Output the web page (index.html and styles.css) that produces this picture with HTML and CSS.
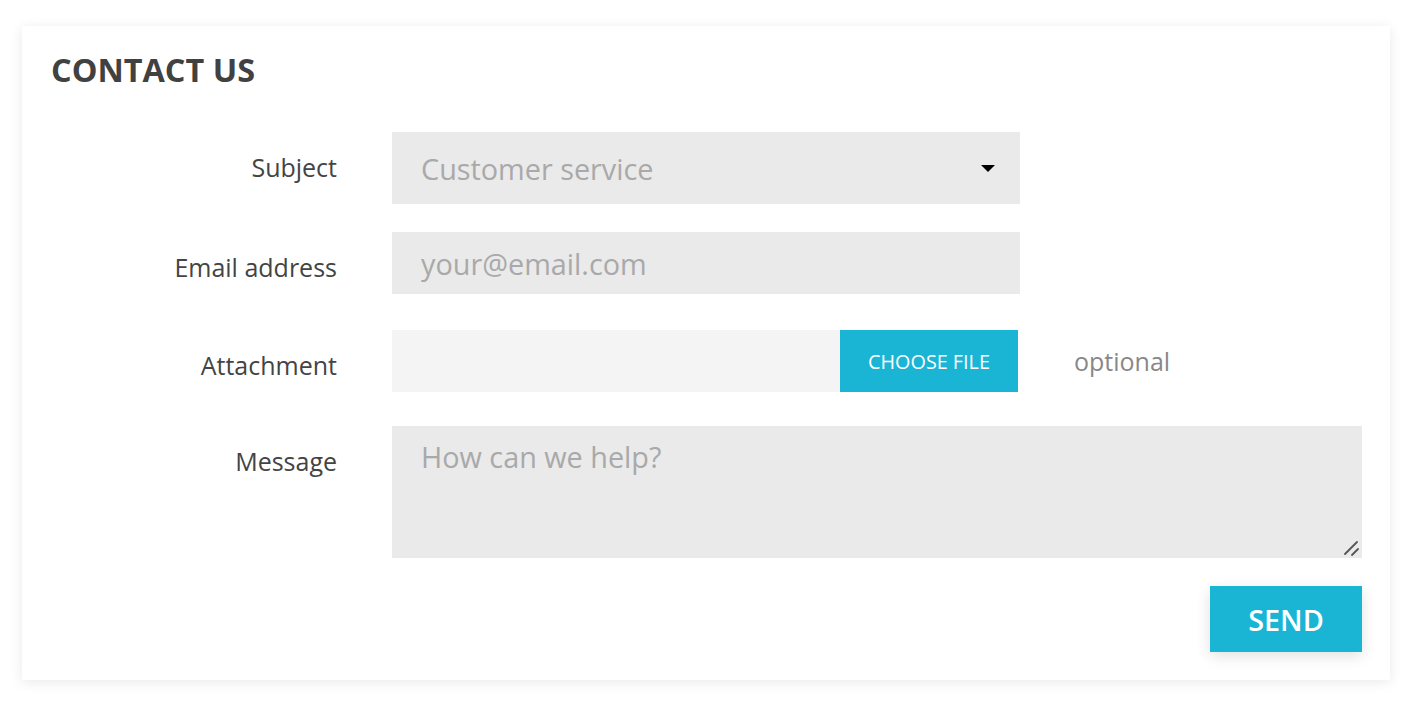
FILE: index.html
```html
<!DOCTYPE html>
<html lang="en">
<head>
<meta charset="utf-8">
<title>Contact us</title>
<link rel="stylesheet" href="styles.css">
</head>
<body>
<div class="page">
  <section class="card">
    <h1 class="title">CONTACT US</h1>
    <form class="form">
      <label class="label" for="subject">Subject</label>
      <div class="field field-subject">
        <div class="select-wrap">
          <select id="subject" class="select">
            <option>Customer service</option>
            <option>Webmaster</option>
          </select>
          <svg class="caret" width="14" height="7" viewBox="0 0 14 7" aria-hidden="true"><path d="M0 0H14L7 7Z" fill="#000"/></svg>
        </div>
      </div>

      <label class="label" for="email">Email address</label>
      <div class="field field-email">
        <input id="email" class="input" type="email" placeholder="your@email.com">
      </div>

      <label class="label" for="file">Attachment</label>
      <div class="field field-file">
        <div class="file">
          <span class="file-name"></span>
          <label class="file-btn" for="file">CHOOSE FILE</label>
          <input id="file" class="file-input" type="file">
        </div>
        <span class="optional">optional</span>
      </div>

      <label class="label" for="message">Message</label>
      <div class="field field-message">
        <div class="textarea-wrap">
          <textarea id="message" class="textarea" placeholder="How can we help?"></textarea>
          <svg class="grip" width="16" height="16" viewBox="0 0 16 16" aria-hidden="true">
            <path d="M2 14L14 2M9 15L15 9" stroke="#555" stroke-width="1.8" stroke-linecap="round" fill="none"/>
          </svg>
        </div>
      </div>

      <div class="actions">
        <button type="button" class="send">SEND</button>
      </div>
    </form>
  </section>
</div>
</body>
</html>
```

FILE: styles.css
```css
* {
  box-sizing: border-box;
}

html, body {
  margin: 0;
  padding: 0;
  background: #ffffff;
}

body {
  font-family: "Open Sans", "Liberation Sans", sans-serif;
  color: #444444;
}

.page {
  padding: 26px 24px 30px 22px;
}

.card {
  width: 1368px;
  background: #ffffff;
  padding: 21px 28px 28px 29px;
  box-shadow: 0 2px 12px rgba(0, 0, 0, 0.09);
}

.title {
  margin: 0 0 41px 0;
  font-size: 32.4px;
  line-height: 44px;
  font-weight: 700;
  color: #414141;
}

.form {
  display: grid;
  grid-template-columns: 286px 970px;
  column-gap: 55px;
  align-items: start;
}

.label {
  text-align: right;
  font-size: 25px;
  line-height: 34px;
  padding-top: 18px;
  color: #444444;
}

.field-subject { margin-bottom: 28px; }
.field-email { margin-bottom: 36px; }
.field-file { margin-bottom: 34px; }
.field-message { margin-bottom: 28px; }

.select-wrap {
  position: relative;
  width: 628px;
}

.select {
  appearance: none;
  -webkit-appearance: none;
  display: block;
  width: 628px;
  height: 72px;
  padding: 0 60px 0 29px;
  border: 0;
  border-radius: 0;
  background: #eaeaea;
  font-family: inherit;
  font-size: 28.8px;
  color: #a9a9a9;
  outline: none;
}

.caret {
  position: absolute;
  left: 589px;
  top: 33px;
  pointer-events: none;
}

.input {
  display: block;
  width: 628px;
  height: 62px;
  padding: 0 29px;
  border: 0;
  border-radius: 0;
  background: #eaeaea;
  font-family: inherit;
  font-size: 28.8px;
  color: #444444;
  outline: none;
}

.input::placeholder,
.textarea::placeholder {
  color: #a9a9a9;
}

.field-file {
  display: flex;
  align-items: center;
}

.file {
  display: flex;
  height: 62px;
}

.file-name {
  width: 448px;
  background: #f4f4f4;
}

.file-btn {
  width: 178px;
  background: #1ab5d5;
  color: #ffffff;
  font-size: 19.8px;
  display: flex;
  align-items: center;
  justify-content: center;
  cursor: pointer;
}

.file-input {
  display: none;
}

.optional {
  margin-left: 56px;
  font-size: 25px;
  color: #888888;
}

.textarea-wrap {
  position: relative;
  width: 970px;
}

.textarea {
  display: block;
  width: 970px;
  height: 132px;
  padding: 12px 29px;
  border: 0;
  border-radius: 0;
  background: #eaeaea;
  font-family: inherit;
  font-size: 28.8px;
  line-height: 38px;
  color: #444444;
  resize: none;
  outline: none;
}

.grip {
  position: absolute;
  right: 3px;
  bottom: 2px;
  pointer-events: none;
}

.actions {
  grid-column: 2;
  display: flex;
  justify-content: flex-end;
}

.send {
  width: 152px;
  height: 66px;
  border: 0;
  border-radius: 0;
  background: #1ab5d5;
  color: #ffffff;
  font-family: inherit;
  font-size: 28.8px;
  font-weight: 600;
  box-shadow: 0 4px 14px rgba(0, 0, 0, 0.12);
  cursor: pointer;
}
```
